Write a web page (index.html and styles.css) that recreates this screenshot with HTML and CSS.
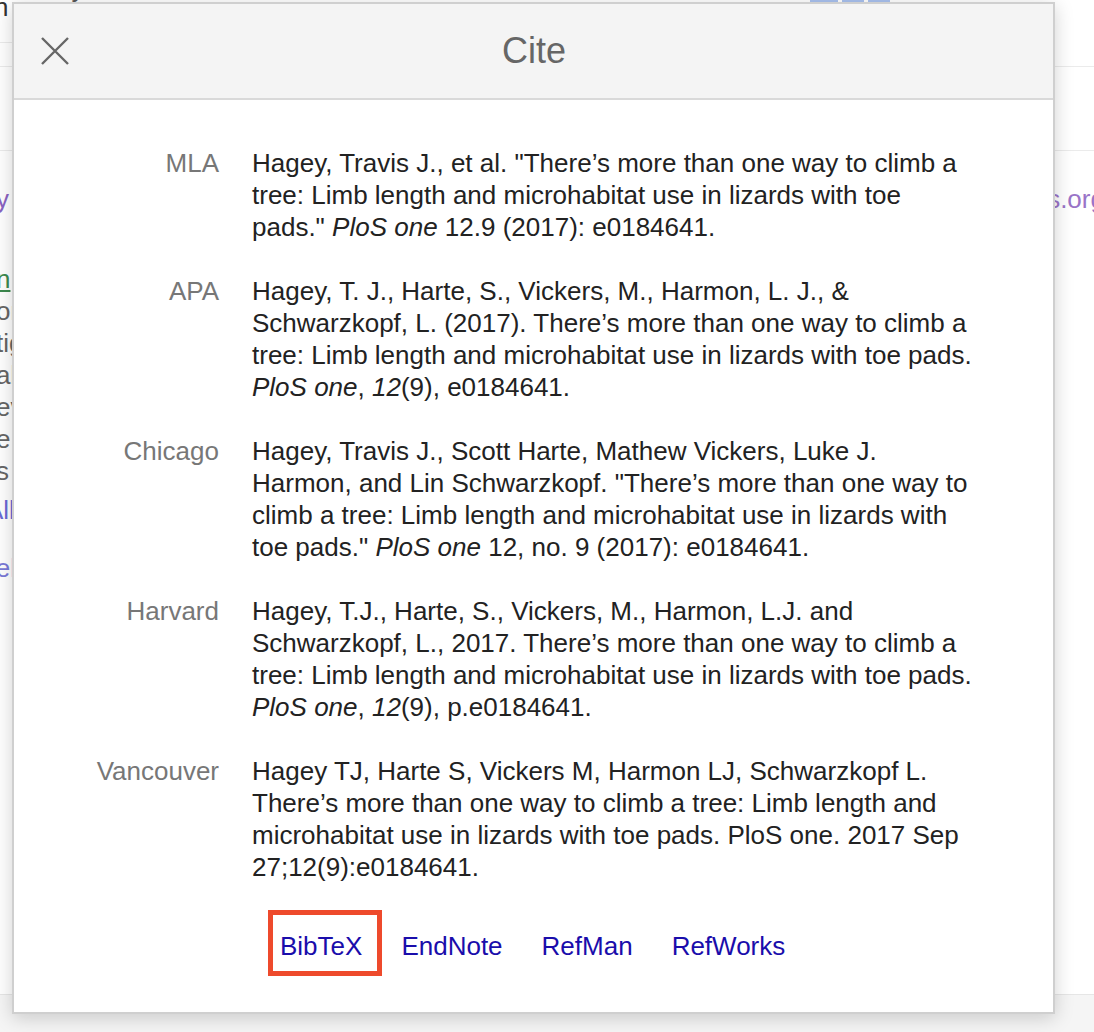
FILE: index.html
```html
<!DOCTYPE html>
<html lang="en">
<head>
<meta charset="utf-8">
<title>Cite</title>
<link rel="stylesheet" href="styles.css">
</head>
<body>
<div class="page">
  <div class="bg-top">
    <div class="bg-query">
      <span class="q-n">n</span>
      <span class="q-rest">e way to climb a tree</span>
      <span class="q-tiles"><i></i><i></i><i></i></span>
    </div>
    <div class="bg-rule-short"></div>
  </div>
  <div class="bg-tabs"></div>
  <div class="bg-bar"></div>
  <div class="bg-results">
    <div class="bg-left">
      <div class="bg-title">y to climb a tree: Limb length and microhabitat use</div>
      <div class="bg-author"><u>n</u>. - PloS one, 2017 - journals.plos.org</div>
      <div class="bg-snip">or more than one way to climb a tree</div>
      <div class="bg-snip">tig ation of limb length</div>
      <div class="bg-snip">al and arboreal habitats</div>
      <div class="bg-snip">ev olution of toe pads</div>
      <div class="bg-snip">e lizards with toe pads</div>
      <div class="bg-snip">s microhabitat use</div>
      <div class="bg-all">All 11 versions</div>
      <div class="bg-rel">Related articles</div>
    </div>
    <div class="bg-right">[HTML] plos.org</div>
  </div>
  <div class="bg-footer"></div>

  <div class="dialog" role="dialog" aria-label="Cite">
    <div class="dlg-head">
      <button class="dlg-close" aria-label="Close">
        <svg width="28" height="28" viewBox="0 0 28 28"><path d="M1 1 L27 27 M27 1 L1 27" stroke="#666" stroke-width="2.4" fill="none"/></svg>
      </button>
      <div class="dlg-title">Cite</div>
    </div>
    <div class="dlg-body">
      <div class="cite-table">
        <div class="cite-label">MLA</div>
        <div class="cite-text">Hagey, Travis J., et al. "There’s more than one way to climb a tree: Limb length and microhabitat use in lizards with toe pads." <i>PloS one</i> 12.9 (2017): e0184641.</div>

        <div class="cite-label">APA</div>
        <div class="cite-text">Hagey, T. J., Harte, S., Vickers, M., Harmon, L. J., &amp; Schwarzkopf, L. (2017). There’s more than one way to climb a tree: Limb length and microhabitat use in lizards with toe pads. <i>PloS one</i>, <i>12</i>(9), e0184641.</div>

        <div class="cite-label">Chicago</div>
        <div class="cite-text">Hagey, Travis J., Scott Harte, Mathew Vickers, Luke J. Harmon, and Lin Schwarzkopf. "There’s more than one way to climb a tree: Limb length and microhabitat use in lizards with toe pads." <i>PloS one</i> 12, no. 9 (2017): e0184641.</div>

        <div class="cite-label">Harvard</div>
        <div class="cite-text">Hagey, T.J., Harte, S., Vickers, M., Harmon, L.J. and Schwarzkopf, L., 2017. There’s more than one way to climb a tree: Limb length and microhabitat use in lizards with toe pads. <i>PloS one</i>, <i>12</i>(9), p.e0184641.</div>

        <div class="cite-label">Vancouver</div>
        <div class="cite-text">Hagey TJ, Harte S, Vickers M, Harmon LJ, Schwarzkopf L. There’s more than one way to climb a tree: Limb length and microhabitat use in lizards with toe pads. PloS one. 2017 Sep 27;12(9):e0184641.</div>
      </div>
      <div class="cite-links">
        <a class="cite-link highlighted" href="#">BibTeX</a>
        <a class="cite-link" href="#">EndNote</a>
        <a class="cite-link" href="#">RefMan</a>
        <a class="cite-link" href="#">RefWorks</a>
      </div>
    </div>
  </div>
</div>
</body>
</html>
```

FILE: styles.css
```css
* { box-sizing: border-box; }
html, body { margin: 0; padding: 0; }
body {
  font-family: "Liberation Sans", Arial, sans-serif;
  background: #fff;
  color: #222;
}
.page {
  position: relative;
  width: 1094px;
  height: 1032px;
  overflow: hidden;
  display: flex;
  flex-direction: column;
  background: #fff;
}

/* background page fragments */
.bg-top {
  height: 43px;
  display: flex;
  flex-direction: column;
  justify-content: space-between;
}
.bg-query {
  display: flex;
  align-items: flex-start;
  font-size: 26px;
  line-height: 30px;
  color: #444;
  height: 30px;
  white-space: nowrap;
}
.q-n { margin-left: -6px; margin-top: -8px; color: #333; }
.q-rest { margin-left: 8px; margin-top: -27px; color: #555; }
.q-tiles { display: flex; gap: 4px; margin-left: 555px; margin-top: -4px; }
.q-tiles i { display: block; width: 22px; height: 8px; background: #a9c1ef; }
.q-tiles i:first-child { width: 28px; }
.bg-rule-short { width: 14px; height: 1px; background: #ebebeb; }
.bg-tabs { height: 24px; border-bottom: 1px solid #ebebeb; }
.bg-bar { height: 84px; border-bottom: 1px solid #ebebeb; }
.bg-results {
  flex: 1;
  display: flex;
  padding-top: 32px;
  font-size: 26px;
  line-height: 32px;
  white-space: nowrap;
}
.bg-left { flex: none; margin-left: -4px; width: 930px; }
.bg-title { color: #8a63c2; }
.bg-author { color: #777; margin-top: 48px; }
.bg-author u { color: #3d8a4f; }
.bg-snip { color: #666; }
.bg-all { color: #6a6ad6; margin-top: 7px; margin-left: -10px; }
.bg-rel { color: #7a7ad8; margin-top: 26px; margin-left: -19px; }
.bg-right { flex: none; color: #9a74c8; margin-left: -6px; }
.bg-footer {
  height: 38px;
  border-top: 1px solid #e6e6e6;
  background: #f5f5f5;
}

/* dialog */
.dialog {
  position: absolute;
  left: 12px;
  top: 2px;
  width: 1043px;
  height: 1012px;
  background: #fff;
  border: 2px solid #cfcfcf;
  box-shadow: 0 4px 18px rgba(0, 0, 0, 0.18);
  display: flex;
  flex-direction: column;
}
.dlg-head {
  height: 96px;
  background: #f4f4f4;
  border-bottom: 2px solid #d9d9d9;
  display: flex;
  align-items: center;
  position: relative;
}
.dlg-close {
  position: absolute;
  left: 27px;
  top: 33px;
  width: 28px;
  height: 28px;
  padding: 0;
  border: 0;
  background: transparent;
  display: flex;
}
.dlg-title {
  flex: 1;
  text-align: center;
  font-size: 36px;
  color: #666;
  padding-left: 1px;
}
.dlg-body {
  padding-top: 47px;
}
.cite-table {
  display: grid;
  grid-template-columns: 205px 725px;
  column-gap: 33px;
  row-gap: 32px;
  font-size: 26px;
  line-height: 32px;
}
.cite-label {
  text-align: right;
  color: #777;
}
.cite-text {
  color: #222;
}
.cite-links {
  display: flex;
  gap: 39px;
  margin-top: 47px;
  margin-left: 266px;
  font-size: 26px;
  line-height: 32px;
}
.cite-link {
  color: #1a0dab;
  text-decoration: none;
}
.cite-link.highlighted {
  position: relative;
}
.cite-link.highlighted::after {
  content: "";
  position: absolute;
  top: -20px;
  bottom: -14px;
  left: -12px;
  right: -20px;
  border: 5px solid #ee4a2c;
}
```
